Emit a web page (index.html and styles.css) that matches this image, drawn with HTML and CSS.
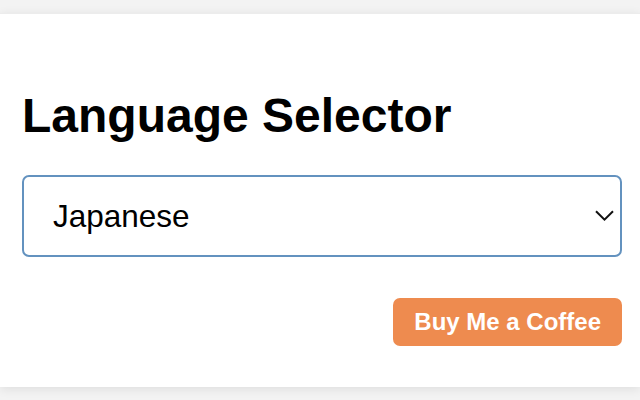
FILE: index.html
```html
<!DOCTYPE html>
<html lang="en">
<head>
<meta charset="utf-8">
<title>Language Selector</title>
<link rel="stylesheet" href="styles.css">
</head>
<body>
  <main class="card">
    <h1 class="title">Language Selector</h1>
    <div class="select-wrap">
      <select class="lang-select">
        <option>English</option>
        <option selected>Japanese</option>
        <option>Chinese</option>
        <option>Korean</option>
      </select>
      <svg class="chevron" width="19" height="11" viewBox="0 0 19 11" aria-hidden="true">
        <path d="M1 1.2 L9.5 9.6 L18 1.2" fill="none" stroke="#111" stroke-width="2"/>
      </svg>
    </div>
    <div class="actions">
      <a class="coffee-btn" href="#">Buy Me a Coffee</a>
    </div>
  </main>
</body>
</html>
```

FILE: styles.css
```css
html, body {
  margin: 0;
  padding: 0;
}
body {
  background: #f3f3f3;
  padding-top: 13px;
  height: 400px;
  box-sizing: border-box;
  overflow: hidden;
  font-family: "Liberation Sans", Arial, sans-serif;
}
.card {
  background: #ffffff;
  border-top: 1px solid #ececec;
  padding: 74px 18px 41px 22px;
  box-shadow: 0 2px 10px rgba(0, 0, 0, 0.09);
}
.title {
  margin: 0 0 31px 0;
  font-size: 48px;
  line-height: 56px;
  font-weight: 700;
  color: #000;
}
.select-wrap {
  position: relative;
}
.lang-select {
  display: block;
  width: 100%;
  height: 82px;
  box-sizing: border-box;
  -webkit-appearance: none;
  appearance: none;
  background: #fff;
  border: 2px solid #6392bf;
  border-radius: 7px;
  padding: 0 60px 0 29px;
  font-family: "Liberation Sans", Arial, sans-serif;
  font-size: 31.5px;
  color: #000;
  outline: none;
}
.chevron {
  position: absolute;
  right: 8px;
  top: 35px;
}
.actions {
  display: flex;
  justify-content: flex-end;
  margin-top: 41px;
}
.coffee-btn {
  display: inline-block;
  background: #ee8b4f;
  color: #fff;
  text-decoration: none;
  font-weight: 700;
  font-size: 24px;
  line-height: 48px;
  padding: 0 21px;
  border-radius: 7px;
}
```
